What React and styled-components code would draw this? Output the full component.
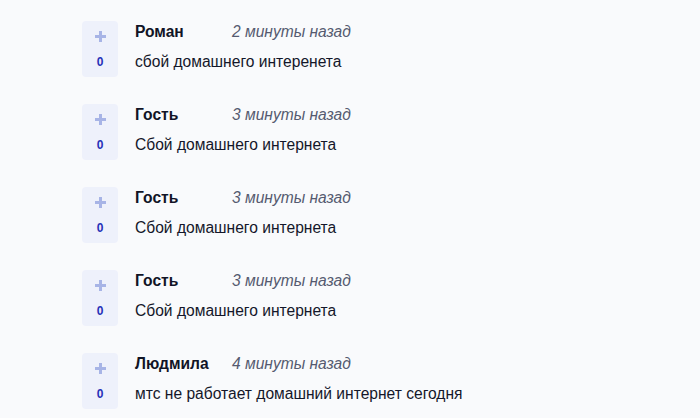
import React from "react";
import styled, { createGlobalStyle } from "styled-components";

const Global = createGlobalStyle`
  html, body { margin: 0; padding: 0; background: #f9fafc; }
  body { font-family: "Liberation Sans", Arial, sans-serif; }
`;

const List = styled.div`
  display: flex;
  flex-direction: column;
  gap: 27px;
  padding: 21px 0 0 82px;
  height: 418px;
  box-sizing: border-box;
  overflow: hidden;
`;

const Item = styled.div`
  display: flex;
  gap: 17px;
`;

const Vote = styled.div`
  width: 36px;
  height: 56px;
  flex: none;
  border-radius: 4px;
  background: #eef1fb;
  display: flex;
  flex-direction: column;
  align-items: center;
  padding-top: 10px;
  box-sizing: border-box;
`;

const PlusIcon = styled.svg`
  display: block;
  width: 11px;
  height: 11px;
`;

const Count = styled.div`
  color: #2630b8;
  font-size: 12px;
  font-weight: 700;
  line-height: 14px;
  margin-top: 13px;
`;

const Body = styled.div`
  display: flex;
  flex-direction: column;
  padding-top: 2px;
`;

const Head = styled.div`
  display: flex;
  align-items: baseline;
  height: 20px;
`;

const Name = styled.span`
  width: 97px;
  font-size: 15.6px;
  font-weight: 700;
  color: #111426;
`;

const Time = styled.span`
  font-size: 15.6px;
  font-style: italic;
  color: #555a70;
`;

const Text = styled.div`
  margin-top: 10px;
  font-size: 15.6px;
  color: #14172a;
`;

const comments = [
  { name: "Роман", time: "2 минуты назад", text: "сбой домашнего интеренета" },
  { name: "Гость", time: "3 минуты назад", text: "Сбой домашнего интернета" },
  { name: "Гость", time: "3 минуты назад", text: "Сбой домашнего интернета" },
  { name: "Гость", time: "3 минуты назад", text: "Сбой домашнего интернета" },
  { name: "Людмила", time: "4 минуты назад", text: "мтс не работает домашний интернет сегодня" },
];

export default function App() {
  return (
    <>
      <Global />
      <List>
        {comments.map((c, i) => (
          <Item key={i}>
            <Vote>
              <PlusIcon viewBox="0 0 11 11">
                <path d="M5.5 0v11M0 5.5h11" stroke="#a7b4e6" strokeWidth="3" />
              </PlusIcon>
              <Count>0</Count>
            </Vote>
            <Body>
              <Head>
                <Name>{c.name}</Name>
                <Time>{c.time}</Time>
              </Head>
              <Text>{c.text}</Text>
            </Body>
          </Item>
        ))}
      </List>
    </>
  );
}
